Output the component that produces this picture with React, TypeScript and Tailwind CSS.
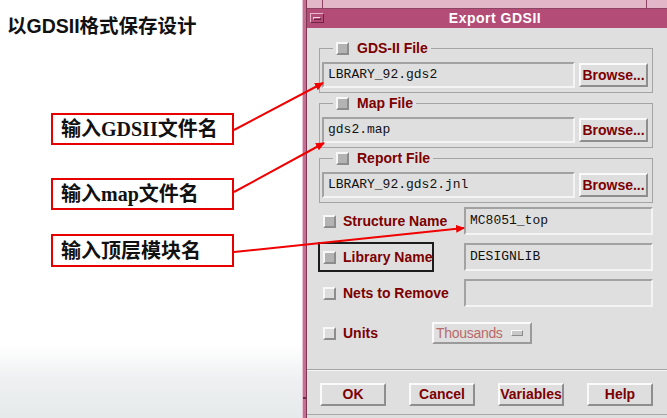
import React from "react";

const RED = "text-[#7d0000]";

function Check({ filled }: { filled?: boolean }) {
  return (
    <span
      className={`block h-[13px] w-[13px] shrink-0 border-2 border-t-[#f7f7f7] border-l-[#f7f7f7] border-b-[#8c8c8c] border-r-[#8c8c8c] ${
        filled ? "bg-[#b3b3b3]" : "bg-[#dcdcdc]"
      }`}
    />
  );
}

function Field({ className, children }: { className: string; children?: React.ReactNode }) {
  return (
    <div
      className={`flex items-center border-2 border-t-[#a2a2a2] border-l-[#a2a2a2] border-b-[#f4f4f4] border-r-[#f4f4f4] pl-[4px] font-['Liberation_Mono',monospace] text-[13px] text-[#111] ${className}`}
    >
      {children}
    </div>
  );
}

function Btn({ className, children }: { className: string; children: React.ReactNode }) {
  return (
    <div
      className={`flex items-center justify-center border-2 border-t-[#fafafa] border-l-[#fafafa] border-b-[#8e8e8e] border-r-[#8e8e8e] bg-[#dedede] text-[14px] font-bold ${RED} ${className}`}
    >
      {children}
    </div>
  );
}

function FileGroup({ title, value }: { title: string; value: string }) {
  return (
    <fieldset className="w-[334px] border border-[#a4a4a4] pb-[4px] pl-[2px] pr-[3px] pt-[7px]">
      <legend className="ml-[11px] flex h-[14px] items-center gap-[8px] px-[3px]">
        <Check filled />
        <span className={`text-[14px] font-bold leading-none ${RED}`}>{title}</span>
      </legend>
      <div className="flex items-center gap-[4px]">
        <Field className="h-[26px] w-[253px]">{value}</Field>
        <Btn className="h-[24px] w-[69px]">Browse...</Btn>
      </div>
    </fieldset>
  );
}

function Row({
  label,
  value,
  filled,
  focus,
}: {
  label: string;
  value: string;
  filled?: boolean;
  focus?: boolean;
}) {
  return (
    <div className="flex h-[30px] items-center">
      <div
        className={`flex h-[30px] w-[116px] items-center gap-[7px] border-2 pl-[3px] ${
          focus ? "border-[#1c1c1c]" : "border-transparent"
        }`}
      >
        <Check filled={filled} />
        <span className={`whitespace-nowrap text-[14px] font-bold ${RED}`}>{label}</span>
      </div>
      <Field className="ml-[30px] h-[28px] w-[189px]">{value}</Field>
    </div>
  );
}

export default function App() {
  return (
    <div className="relative flex h-[418px] w-[667px] overflow-hidden bg-white font-['Liberation_Sans','Noto_Sans_CJK_SC',sans-serif]">
      {/* left slide part */}
      <div className="flex w-[302px] shrink-0 flex-col bg-[linear-gradient(to_bottom,#ffffff_0px,#ffffff_345px,#eef0f1_380px,#e6eaeb_418px)] pl-[7px] pt-[13px]">
        <h1 className="text-[19.5px] font-bold leading-[27px] text-[#111]">以GDSII格式保存设计</h1>
        <div className="ml-[44px] mt-[73px] flex flex-col font-['Liberation_Serif','Noto_Sans_CJK_SC',serif] text-[20px] font-bold text-[#111]">
          <div className="flex h-[32px] w-[183px] items-center border-2 border-[#e60000] pl-[8px]">输入GDSII文件名</div>
          <div className="mt-[33px] flex h-[32px] w-[183px] items-center border-2 border-[#e60000] pl-[8px]">输入map文件名</div>
          <div className="mt-[24px] flex h-[33px] w-[183px] items-center border-2 border-[#e60000] pl-[8px]">输入顶层模块名</div>
        </div>
      </div>

      {/* dialog window */}
      <div className="flex w-[381px] shrink-0">
        <div className="flex w-[5px] flex-col border-l border-r border-l-[#e9c3d2] border-r-[#7e3553] bg-[#c56f93]">
          <div className="mt-[397px] h-[2px] bg-[#6e2a47]" />
        </div>
        <div className="flex flex-1 flex-col">
          <div className="flex h-[9px] border-b border-[#8d4463] bg-[#e2b7c8]">
            <div className="w-[16px] border-r border-[#8d4463]" />
            <div className="w-[324px] border-r border-[#8d4463]" />
          </div>
          <div className="relative flex h-[19px] items-center justify-center bg-[#b34c77]">
            <div className="absolute left-[3px] top-[4px] flex h-[10px] w-[14px] items-center justify-center border border-t-[#e8b7ca] border-l-[#e8b7ca] border-b-[#6f2444] border-r-[#6f2444]">
              <div className="h-[3px] w-[8px] border border-t-[#f3d6e2] border-l-[#f3d6e2] border-b-[#6f2444] border-r-[#6f2444]" />
            </div>
            <span className="text-[14px] font-bold tracking-[0.5px] text-white">Export GDSII</span>
          </div>
          <div className="flex flex-1 flex-col bg-[#dfdfdf]">
            <div className="flex h-[341px] flex-col pl-[12px] pt-[13px]">
              <div className="flex flex-col gap-[3px]">
                <FileGroup title="GDS-II File" value="LBRARY_92.gds2" />
                <FileGroup title="Map File" value="gds2.map" />
                <FileGroup title="Report File" value="LBRARY_92.gds2.jnl" />
              </div>
              <div className="ml-[-1px] mt-[3px] flex flex-col gap-[6px]">
                <Row label="Structure Name" value="MC8051_top" filled />
                <Row label="Library Name" value="DESIGNLIB" filled focus />
                <Row label="Nets to Remove" value="" />
                <div className="mt-[4px] flex h-[30px] items-center">
                  <div className="flex h-[30px] w-[114px] items-center gap-[7px] border-2 border-transparent pl-[3px]">
                    <Check />
                    <span className={`text-[14px] font-bold ${RED}`}>Units</span>
                  </div>
                  <div className="flex h-[22px] w-[100px] items-center border-2 border-t-[#fafafa] border-l-[#fafafa] border-b-[#9a9a9a] border-r-[#9a9a9a] pl-[2px]">
                    <span className="text-[14px] tracking-[-0.3px] text-[#b86a6a]">Thousands</span>
                    <span className="ml-[8px] block h-[6px] w-[12px] border border-t-[#f8f8f8] border-l-[#f8f8f8] border-b-[#8a8a8a] border-r-[#8a8a8a] bg-[#c8c8c8]" />
                  </div>
                </div>
              </div>
            </div>
            <div className="h-[2px] border-t border-b border-t-[#a3a3a3] border-b-[#f6f6f6]" />
            <div className="flex gap-[23px] pl-[13px] pt-[12px]">
              <Btn className="h-[23px] w-[66px]">OK</Btn>
              <Btn className="h-[23px] w-[66px]">Cancel</Btn>
              <Btn className="h-[23px] w-[66px]">Variables</Btn>
              <Btn className="h-[23px] w-[66px]">Help</Btn>
            </div>
            <div className="mt-[8px] h-px bg-[#a8a8a8]" />
          </div>
        </div>
      </div>

      {/* annotation arrows */}
      <svg className="pointer-events-none absolute left-0 top-0" width="667" height="418">
        <defs>
          <marker id="ah" markerWidth="9" markerHeight="8" refX="8" refY="4" orient="auto" markerUnits="userSpaceOnUse">
            <path d="M0,0 L9,4 L0,8 z" fill="#f00000" />
          </marker>
        </defs>
        <line x1="234" y1="130" x2="323" y2="83" stroke="#f00000" strokeWidth="2" markerEnd="url(#ah)" />
        <line x1="234" y1="192" x2="324" y2="143" stroke="#f00000" strokeWidth="2" markerEnd="url(#ah)" />
        <line x1="234" y1="252" x2="464" y2="228" stroke="#f00000" strokeWidth="2" markerEnd="url(#ah)" />
      </svg>
    </div>
  );
}
